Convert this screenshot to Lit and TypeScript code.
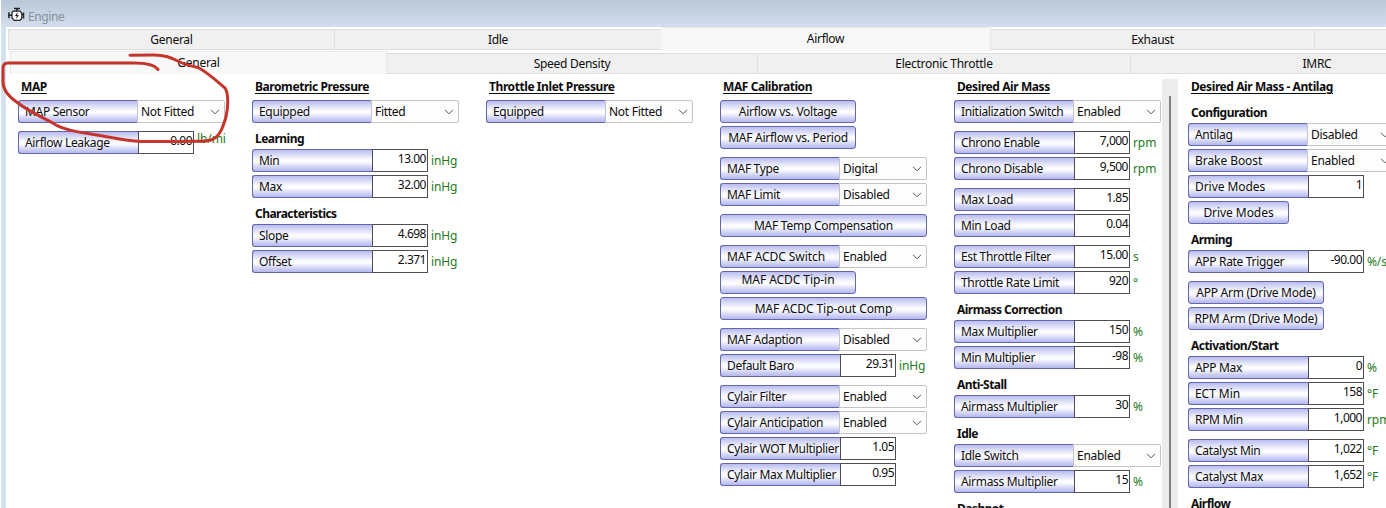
import { LitElement, html, css, svg } from "lit";
import { customElement } from "lit/decorators.js";
import { classMap } from "lit/directives/class-map.js";

type Item =
  | { k: "title"; t: string }
  | { k: "head"; t: string }
  | { k: "gap" }
  | { k: "sel"; t: string; v: string }
  | { k: "num"; t: string; v: string; u?: string; high?: boolean }
  | { k: "btn"; t: string; size: string; high?: boolean };

const title = (t: string): Item => ({ k: "title", t });
const head = (t: string): Item => ({ k: "head", t });
const gap: Item = { k: "gap" };
const sel = (t: string, v: string): Item => ({ k: "sel", t, v });
const num = (t: string, v: string, u = "", high = false): Item => ({ k: "num", t, v, u, high });
const btn = (t: string, size = "mid", high = false): Item => ({ k: "btn", t, size, high });

const COLUMNS: Item[][] = [
  [title("MAP"), sel("MAP Sensor", "Not Fitted"), gap, num("Airflow Leakage", "0.00", "lb/mi", true)],
  [
    title("Barometric Pressure"), sel("Equipped", "Fitted"),
    head("Learning"), num("Min", "13.00", "inHg"), num("Max", "32.00", "inHg"),
    head("Characteristics"), num("Slope", "4.698", "inHg"), num("Offset", "2.371", "inHg"),
  ],
  [title("Throttle Inlet Pressure"), sel("Equipped", "Not Fitted")],
  [
    title("MAF Calibration"), btn("Airflow vs. Voltage"), btn("MAF Airflow vs. Period"), gap,
    sel("MAF Type", "Digital"), sel("MAF Limit", "Disabled"), gap,
    btn("MAF Temp Compensation", "wide"), gap,
    sel("MAF ACDC Switch", "Enabled"), btn("MAF ACDC Tip-in", "mid", true),
    btn("MAF ACDC Tip-out Comp", "wide"), gap,
    sel("MAF Adaption", "Disabled"), num("Default Baro", "29.31", "inHg"), gap,
    sel("Cylair Filter", "Enabled"), sel("Cylair Anticipation", "Enabled"),
    num("Cylair WOT Multiplier", "1.05"), num("Cylair Max Multiplier", "0.95"),
  ],
  [
    title("Desired Air Mass"), sel("Initialization Switch", "Enabled"), gap,
    num("Chrono Enable", "7,000", "rpm"), num("Chrono Disable", "9,500", "rpm"), gap,
    num("Max Load", "1.85"), num("Min Load", "0.04"), gap,
    num("Est Throttle Filter", "15.00", "s"), num("Throttle Rate Limit", "920", "°"),
    head("Airmass Correction"), num("Max Multiplier", "150", "%"), num("Min Multiplier", "-98", "%"),
    head("Anti-Stall"), num("Airmass Multiplier", "30", "%"),
    head("Idle"), sel("Idle Switch", "Enabled"), num("Airmass Multiplier", "15", "%"),
    head("Dashpot"),
  ],
  [
    title("Desired Air Mass - Antilag"), head("Configuration"),
    sel("Antilag", "Disabled"), sel("Brake Boost", "Enabled"), num("Drive Modes", "1"),
    btn("Drive Modes", "small"),
    head("Arming"), num("APP Rate Trigger", "-90.00", "%/s"), gap,
    btn("APP Arm (Drive Mode)"), btn("RPM Arm (Drive Mode)"),
    head("Activation/Start"), num("APP Max", "0", "%"), num("ECT Min", "158", "°F"),
    num("RPM Min", "1,000", "rpm"), gap,
    num("Catalyst Min", "1,022", "°F"), num("Catalyst Max", "1,652", "°F"),
    head("Airflow"),
  ],
];

const isCaps = (t: string) => /ACDC|^(Brake|Drive|ECT)/.test(t);

@customElement("setting-row")
export class SettingRow extends LitElement {
  static properties = { item: { attribute: false } };
  declare item: Item;

  static styles = css`
    :host { display: block; flex: none; }
    * { box-sizing: border-box; }
    .title, .head { font-weight: 700; letter-spacing: -0.42px; white-space: nowrap; padding-left: 3px; }
    .title { height: 22px; line-height: 18px; text-decoration: underline; text-underline-offset: 2px; text-decoration-thickness: 1px; }
    .head { height: 23px; line-height: 26px; letter-spacing: -0.53px; }
    .gap { height: 5px; }
    .row { display: flex; height: 23px; margin-bottom: 3px; white-space: nowrap; }
    .label, .btn {
      border: 1px solid #6466ae;
      background: linear-gradient(#b9bcee 0%, #d6d8f6 20%, #fdfdff 48%, #fbfbff 58%, #d3d5f6 80%, #b4b8ee 100%);
    }
    .label { width: 120px; flex: none; border-right: 0; border-radius: 3px 0 0 3px; padding-left: 6px; line-height: 22px; letter-spacing: -0.32px; }
    .sel .label { width: 119px; }
    .btn { border-radius: 3px; width: 136px; text-align: center; line-height: 22px; letter-spacing: -0.26px; }
    .label.caps, .btn.caps { letter-spacing: -0.06px; }
    .btn.wide { width: 207px; }
    .btn.small { width: 101px; }
    .btn.high { line-height: 15px; }
    .value { width: 56px; flex: none; border: 1px solid #4e4e52; background: #fff; text-align: right; padding-right: 1px; line-height: 17px; letter-spacing: -0.5px; }
    .choice { width: 88px; flex: none; border: 1px solid #c4c4c6; border-radius: 0 2px 2px 0; background: #fdfdfd; display: flex; align-items: center; justify-content: space-between; padding: 0 4px 0 3px; line-height: 21px; letter-spacing: -0.28px; }
    .choice svg { width: 10px; height: 6px; fill: none; stroke: #555; }
    .unit { color: #1d7a1d; padding-left: 3px; line-height: 24px; letter-spacing: -0.1px; }
    .unit.high { line-height: 16px; }
  `;

  render() {
    const i = this.item;
    switch (i.k) {
      case "title": return html`<div class="title">${i.t}</div>`;
      case "head": return html`<div class="head">${i.t}</div>`;
      case "gap": return html`<div class="gap"></div>`;
      case "sel":
        return html`<div class="row sel"><div class=${classMap({ label: true, caps: isCaps(i.t) })}>${i.t}</div><div class="choice"><span>${i.v}</span>
          <svg viewBox="0 0 10 6"><path d="M1 .8 5 4.8 9 .8" /></svg></div></div>`;
      case "num":
        return html`<div class="row"><div class=${classMap({ label: true, caps: isCaps(i.t) })}>${i.t}</div><div class="value">${i.v}</div>
          <div class=${classMap({ unit: true, high: !!i.high })}>${i.u}</div></div>`;
      case "btn":
        return html`<div class="row"><div class=${classMap({ btn: true, caps: isCaps(i.t), [i.size]: true, high: !!i.high })}>${i.t}</div></div>`;
    }
  }
}

const engineIcon = svg`
  <path d="M6 1.5h6M9 1.5v2.5" stroke="#222" stroke-width="1.6" />
  <path d="M5 4.2h7l1.8 2.3v5.2l-2 1.6H6.2L4 11V6z" fill="#fff" stroke="#222" stroke-width="1.2" />
  <path d="M.9 5.2v6M1 8.2h3M13.8 7.2h1.6M15.5 5.5v6" stroke="#222" stroke-width="1.5" />
  <path d="M9.6 5.3 7 9h1.8l-.6 3 2.7-3.8H9.2z" fill="#111" />`;

@customElement("app-root")
export class AppRoot extends LitElement {
  static styles = css`
    :host { display: block; height: 508px; overflow: hidden; position: relative; color: #0c0c0c; font: 12px/16px "Noto Sans", "Open Sans", sans-serif; }
    * { box-sizing: border-box; }
    .window { height: 508px; border-left: 1px solid #fff; background: #d3e1f1; display: flex; flex-direction: column; }
    .titlebar { height: 27px; flex: none; background: linear-gradient(#b9c7d8, #d3dfec); display: flex; align-items: center; gap: 3px; padding: 6px 0 0 7px; color: #85909c; letter-spacing: -0.4px; }
    .titlebar svg { width: 17px; height: 15px; fill: none; margin-top: -4px; }
    .panel { margin-left: 5px; flex: 1; min-height: 0; background: #fff; display: flex; flex-direction: column; }
    .tabs { display: flex; flex: none; align-items: flex-end; white-space: nowrap; overflow: hidden; letter-spacing: -0.28px; }
    .main { height: 24px; padding: 0 0 1px 2px; }
    .sub { height: 23px; padding-left: 4px; }
    .tab { flex: none; text-align: center; background: #f0f0f0; border: 1px solid #dedede; border-left-width: 0; height: 21px; line-height: 20px; }
    .tab:first-child { border-left-width: 1px; }
    .tab.on { height: 24px; align-self: flex-start; background: #f8f8f8; border-color: #e8e8e8; border-bottom: 0; line-height: 21px; }
    .main .tab { width: 327px; }
    .main .tab.on { width: 330px; margin-left: -1px; }
    .main .tab.on + .tab { width: 324px; }
    .sub .tab { width: 373px; }
    .sub .tab.on { width: 377px; height: 23px; line-height: 21px; }
    .sub .tab.on + .tab { width: 371px; }
    .body { display: flex; flex: 1; min-height: 0; padding-left: 12px; overflow: hidden; }
    .columns { display: flex; flex: none; }
    .column { width: 234px; flex: none; display: flex; flex-direction: column; padding-top: 4px; }
    .columns .column:last-child { width: 208px; }
    .scroll { flex: none; width: 16px; margin: 5px 10px 0 0; background: #ececec; padding: 17px 0 0 7px; }
    .thumb { width: 2px; height: 100%; background: #808080; }
    .ink { position: absolute; left: 0; top: 0; width: 240px; height: 150px; fill: none; stroke: #c5352b; stroke-width: 3; stroke-linecap: round; stroke-linejoin: round; pointer-events: none; }
  `;

  private tabs(kind: string, names: string[], active: number) {
    return html`<div class="tabs ${kind}">${names.map(
      (n, i) => html`<div class=${classMap({ tab: true, on: i === active })}>${n}</div>`)}</div>`;
  }

  private column(items: Item[]) {
    return html`<div class="column">${items.map((i) => html`<setting-row .item=${i}></setting-row>`)}</div>`;
  }

  render() {
    return html`
      <div class="window">
        <div class="titlebar"><svg viewBox="0 0 17 15">${engineIcon}</svg><span>Engine</span></div>
        <div class="panel">
          ${this.tabs("main", ["General", "Idle", "Airflow", "Exhaust", ""], 2)}
          ${this.tabs("sub", ["General", "Speed Density", "Electronic Throttle", "IMRC"], 0)}
          <div class="body">
            <div class="columns">${COLUMNS.slice(0, 4).map((c) => this.column(c))}${this.column(COLUMNS[4])}</div>
            <div class="scroll"><div class="thumb"></div></div>
            ${this.column(COLUMNS[5])}
          </div>
        </div>
      </div>
      <svg class="ink" viewBox="0 0 240 150">
        <path d="M130 55.3 154 55C168 55 173 59 182 63C189 66 194 66 199 68C208 73 218 82 225 88C229 94 228 108 226 117C223 127 220 137 211 140C205 142 195 141 180 141.5H141C122 141 112 137 91 134C76 132 65 130 56 125C46 119 28 111 18 103C9 97 3 91 3 82V68Q3 63 8 63H134Q153 63 158 69.5" />
      </svg>`;
  }
}
